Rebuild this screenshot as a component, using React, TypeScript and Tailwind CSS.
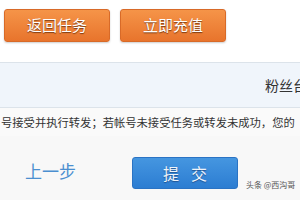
import React from 'react';

export default function App() {
  return (
    <div className="w-[300px] h-[200px] overflow-hidden bg-[#f8f8f8] font-['Noto_Sans_CJK_SC',sans-serif]">
      {/* top actions */}
      <div className="h-[62px] bg-white flex gap-[10px] pl-[4px] pt-[9px]">
        <button className="w-[106px] h-[33px] rounded-[3px] border border-[#d86a28] bg-gradient-to-b from-[#f59448] to-[#e8742c] text-[15px] text-white [text-shadow:0_1px_1px_rgba(90,40,10,0.8)] shadow-[0_1px_2px_rgba(0,0,0,0.2)]">
          返回任务
        </button>
        <button className="w-[106px] h-[33px] rounded-[3px] border border-[#d86a28] bg-gradient-to-b from-[#f59448] to-[#e8742c] text-[15px] text-white [text-shadow:0_1px_1px_rgba(90,40,10,0.8)] shadow-[0_1px_2px_rgba(0,0,0,0.2)]">
          立即充值
        </button>
      </div>

      {/* info band */}
      <div className="h-[46px] border-t border-b border-[#dce3ea] bg-[#f0f5fb] flex items-center pl-[265px] whitespace-nowrap overflow-hidden">
        <span className="text-[14px] text-[#333]">粉丝台</span>
      </div>

      {/* notice line */}
      <div className="h-[28px] bg-[#fafafa] flex items-center whitespace-nowrap overflow-hidden pl-[1px]">
        <span className="text-[11.3px] text-[#333]">号接受并执行转发；若帐号未接受任务或转发未成功，您的</span>
      </div>

      {/* footer actions */}
      <div className="relative h-[64px] flex items-center pt-[10px]">
        <a className="ml-[25px] -mt-[6px] text-[17px] text-[#4b8fd0] leading-none">上一步</a>
        <button className="ml-[56px] w-[106px] h-[32px] rounded-[3px] border border-[#2a73c4] bg-gradient-to-b from-[#4596e0] to-[#2c7dd2] text-[16px] text-[#eef4fb] tracking-[12px] pl-[12px] [text-shadow:0_1px_1px_rgba(20,50,100,0.6)]">
          提交
        </button>
        <span className="absolute left-[246px] top-[44px] text-[8px] leading-[10px] text-[#555] whitespace-nowrap">头条 @西沟哥</span>
      </div>
    </div>
  );
}
